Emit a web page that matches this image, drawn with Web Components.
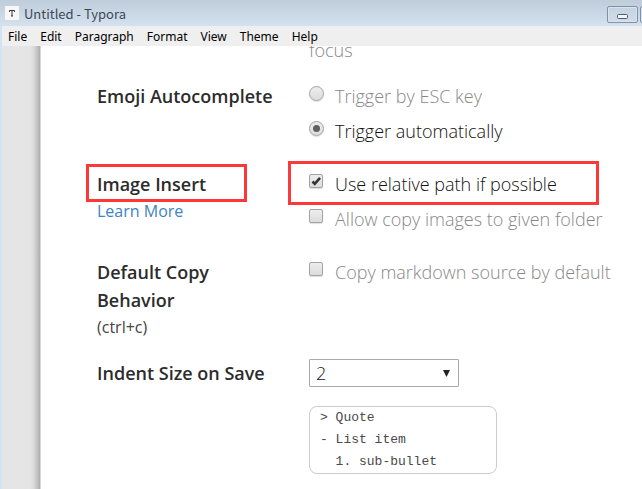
<!DOCTYPE html>
<html lang="en">
<head>
<meta charset="utf-8">
<title>Untitled - Typora</title>
<style>
html, body { height: 100%; margin: 0; }
body { overflow: hidden; background: #fff; }
</style>
</head>
<body>
<typora-window>
  <title-bar slot="chrome">Untitled - Typora</title-bar>
  <menu-bar slot="chrome" items="File,Edit,Paragraph,Format,View,Theme,Help"></menu-bar>
  <setting-row><setting-note>focus</setting-note></setting-row>
  <setting-row heading="Emoji Autocomplete">
    <setting-option type="radio" text="Trigger by ESC key"></setting-option>
    <setting-option type="radio" text="Trigger automatically" checked></setting-option>
  </setting-row>
  <setting-row heading="Image Insert" marked>
    <a slot="extra" href="#learn">Learn More</a>
    <setting-option type="checkbox" text="Use relative path if possible" checked marked></setting-option>
    <setting-option type="checkbox" text="Allow copy images to given folder"></setting-option>
  </setting-row>
  <setting-row heading="Default Copy Behavior">
    <span slot="extra">(ctrl+c)</span>
    <setting-option type="checkbox" text="Copy markdown source by default"></setting-option>
  </setting-row>
  <setting-row heading="Indent Size on Save">
    <indent-select label="Indent Size on Save"></indent-select>
    <code-preview>&gt; Quote
- List item
  1. sub-bullet</code-preview>
  </setting-row>
</typora-window>
<script>
const define = (name, markup, setup) => {
  const template = document.createElement('template');
  template.innerHTML = markup;
  customElements.define(name, class extends HTMLElement {
    constructor() {
      super();
      this.attachShadow({ mode: 'open' }).append(template.content.cloneNode(true));
    }
    connectedCallback() {
      if (setup && !this.ready) { this.ready = true; setup(this, this.shadowRoot); }
    }
  });
};

define('typora-window', `
<style>
:host { display: flex; flex-direction: column; height: 100%; background: #d4e3f2; color: #2c2c2c; font: 18px/28px "Open Sans", sans-serif; }
main { flex: 1; min-height: 0; margin-left: 2px; display: flex; overflow: hidden; background: #fff; }
aside { flex: none; width: 39px; box-sizing: border-box; border-right: 1px solid #d6d6d6;
  background: linear-gradient(to right, #e5e5e5 28px, #d8d8d8 32px, #c3c3c3 35px, #adadad 38px); }
section { flex: 1; min-width: 0; display: flex; flex-direction: column; gap: 18px; margin-top: -10px; padding: 0 24px 15px 56px; }
</style>
<slot name="chrome"></slot>
<main><aside></aside><section><slot></slot></section></main>`);

define('title-bar', `
<style>
:host { display: flex; align-items: center; height: 26px; padding-left: 5px; box-sizing: border-box;
  background: linear-gradient(#bfcddb, #d4e2f0); color: #3f4852; font: 13px/18px "Noto Sans CJK SC", sans-serif; }
.icon { width: 14px; height: 14px; margin-right: 5px; }
.title { flex: 1; padding-top: 2px; }
.buttons { display: flex; gap: 2px; width: 35px; overflow: hidden; padding-top: 3px; }
button { flex: none; width: 31px; height: 17px; box-sizing: border-box; padding: 0; border: 1px solid #8190a8; border-radius: 2px;
  background: linear-gradient(#c5d2df, #d0deeb); box-shadow: inset 0 0 0 1px #d8e3ee; display: grid; place-items: center; }
button svg { margin-top: 4px; }
</style>
<svg class="icon" viewBox="0 0 14 14"><rect width="14" height="14" rx="1" fill="#f7f7f7"/><path d="M4.500 6V4.500H9.500V6M7 4.500V10M6 10H8" fill="none" stroke="#333"/></svg>
<span class="title"><slot></slot></span>
<div class="buttons">
<button aria-label="Minimize"><svg width="11" height="5"><rect x=".5" y=".5" width="10" height="4" rx="1" fill="#f5f5f5" stroke="#53586b"/></svg></button>
<button aria-label="Maximize"></button>
</div>`);

define('menu-bar', `
<style>
:host { display: block; margin-left: 2px; background: #efefef; }
nav { display: flex; gap: 13px; height: 20px; padding-left: 6px; }
button { padding: 1px 0 0; border: 0; background: none; color: #000; font: 12px/16px "Noto Sans", sans-serif; }
</style><nav></nav>`, (host, root) => {
  for (const item of host.getAttribute('items').split(',')) {
    const button = document.createElement('button');
    button.textContent = item;
    root.querySelector('nav').append(button);
  }
});

define('setting-row', `
<style>
:host { display: grid; grid-template-columns: 192px minmax(0, 1fr); column-gap: 20px; align-items: start; }
h2 { margin: 0; font: inherit; font-weight: 600; position: relative; }
:host([heading^="Default"]) h2 { padding-right: 60px; }
:host([marked]) h2::after { content: ""; position: absolute; inset: -6px 42px -4px -11px; border: 3px solid #fd3838; }
::slotted([slot=extra]) { display: block; font-size: 16px; line-height: 27px; text-decoration: none; color: #444; }
::slotted(a) { color: #4183c4 !important; width: max-content; }
</style>
<div><h2></h2><slot name="extra"></slot></div><div><slot></slot></div>`, (host, root) => {
  root.querySelector('h2').textContent = host.getAttribute('heading') || '';
});

define('setting-note', `
<style>:host { display: block; color: #888; font-weight: 300; }</style><slot></slot>`);

define('setting-option', `
<style>
:host { display: block; position: relative; margin-bottom: 7px; color: #888; font-weight: 300; }
:host([checked]) { color: #111; }
:host([marked])::after { content: ""; position: absolute; inset: -9px 19px -7px -21px; border: 3px solid #fd3838; pointer-events: none; }
label { display: grid; grid-template-columns: 15px 1fr; column-gap: 11px; }
input { appearance: none; box-sizing: border-box; width: 14px; height: 14px; margin: 4px 0 0; border: 1px solid #a3a3a3; border-radius: 2px;
  background: linear-gradient(#ededed, #dcdcdc); box-shadow: 0 1px 1px #0002; display: grid; place-items: center; }
input[type=radio] { width: 15px; height: 15px; border-radius: 50%; }
input[type=radio]:checked::before { content: ""; width: 7px; height: 7px; border-radius: 50%; background: #606060; }
.control { display: grid; align-self: start; }
.control > * { grid-area: 1 / 1; }
svg { display: none; width: 14px; height: 14px; margin-top: 4px; pointer-events: none; z-index: 1; }
:host([type=checkbox][checked]) svg { display: block; }
</style>
<label><span class="control"><input><svg viewBox="0 0 14 14"><path d="M3.500 7.500L5.800 9.800L11 3.800" fill="none" stroke="#333" stroke-width="2.600"/></svg></span><span class="text"></span></label>`, (host, root) => {
  const input = root.querySelector('input');
  input.type = host.getAttribute('type');
  input.checked = host.hasAttribute('checked');
  input.addEventListener('change', () => host.toggleAttribute('checked', input.checked));
  root.querySelector('.text').textContent = host.getAttribute('text');
});

define('indent-select', `
<style>
:host { display: grid; width: 150px; margin-bottom: 19px; }
select { grid-area: 1 / 1; appearance: none; box-sizing: border-box; height: 28px; padding: 0 6px; border: 1px solid #a9a9a9; border-radius: 1px;
  background: #fff; color: #111; font: 300 18px/26px "Open Sans", sans-serif; }
svg { grid-area: 1 / 1; place-self: center end; margin-right: 9px; pointer-events: none; }
</style>
<select><option>2</option><option>4</option></select>
<svg width="7" height="7"><path d="M0 0H7L3.500 7Z" fill="#222"/></svg>`, (host, root) => {
  root.querySelector('select').setAttribute('aria-label', host.getAttribute('label'));
});

define('code-preview', `
<style>
:host { display: block; box-sizing: border-box; width: 188px; padding: 0 10px; border: 1px solid #ccc; border-radius: 8px; }
pre { margin: 0; color: #4a4a4a; font: 13px/22px "Liberation Mono", monospace; }
</style><pre><slot></slot></pre>`);
</script>
</body>
</html>
